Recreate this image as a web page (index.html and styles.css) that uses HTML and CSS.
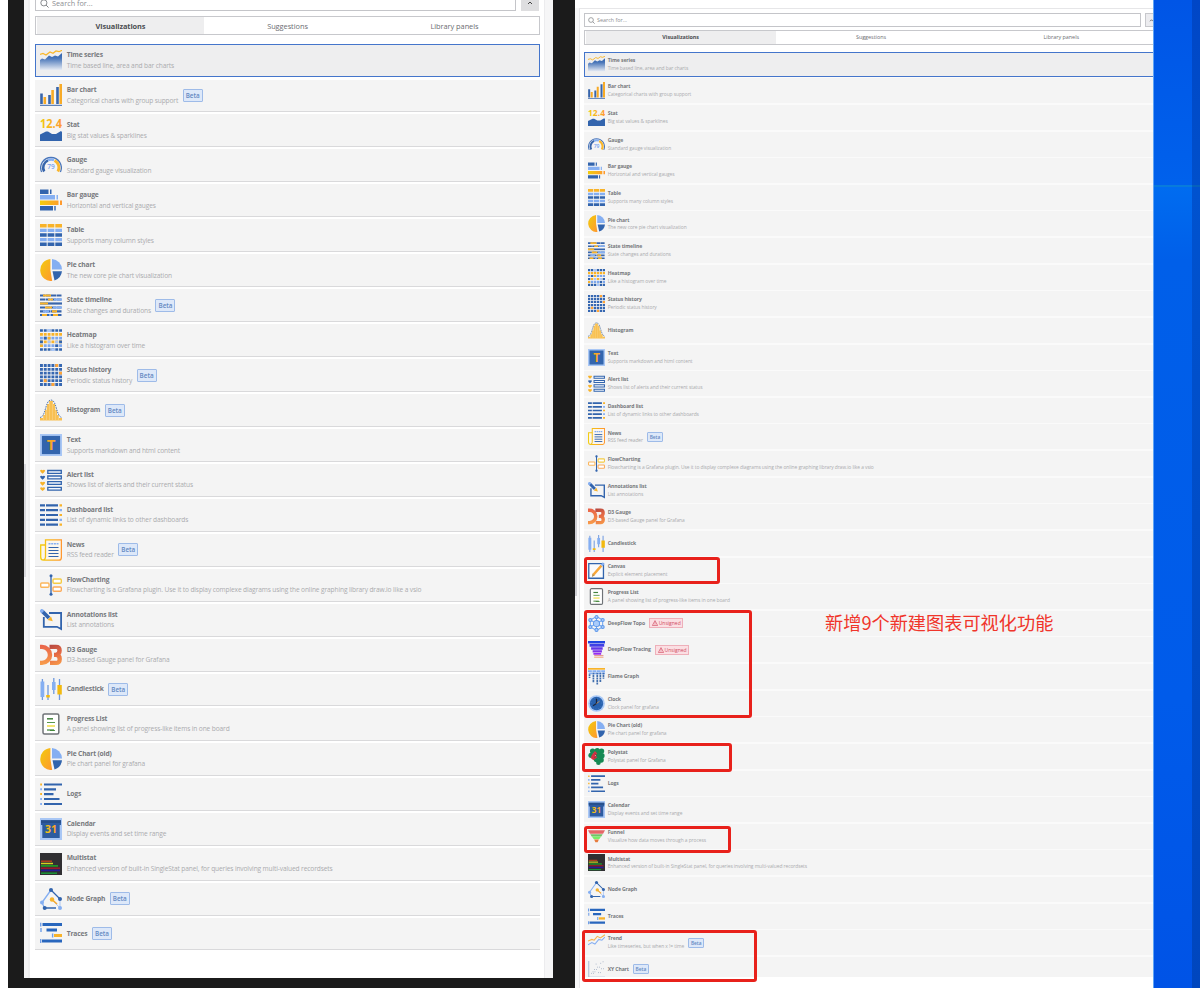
FILE: index.html
```html
<!DOCTYPE html>
<html lang="en">
<head>
<meta charset="utf-8">
<title>Visualizations</title>
<link rel="stylesheet" href="styles.css">
</head>
<body>
<svg class="defs" width="0" height="0">
<defs>
<linearGradient id="gy" x1="0" x2="1" y1="0" y2="1"><stop offset="0" stop-color="#f2cc0c"/><stop offset="1" stop-color="#ff9830"/></linearGradient>
<linearGradient id="gx" x1="0" x2="1" y1="0" y2="0"><stop offset="0" stop-color="#f2cc0c"/><stop offset="1" stop-color="#ff9830"/></linearGradient>
<linearGradient id="ga" x1="0" x2="0" y1="0" y2="1"><stop offset="0" stop-color="#2f62ae"/><stop offset=".3" stop-color="#4674b8"/><stop offset="1" stop-color="#e6ebf4"/></linearGradient>
<linearGradient id="gd" x1="0" x2="0" y1="0" y2="22" gradientUnits="userSpaceOnUse"><stop offset="0" stop-color="#e8604a"/><stop offset="1" stop-color="#f9a04a"/></linearGradient>
<linearGradient id="ge" x1="10" x2="20" y1="0" y2="22" gradientUnits="userSpaceOnUse"><stop offset="0" stop-color="#b0443f"/><stop offset=".5" stop-color="#e66a44"/><stop offset="1" stop-color="#f9a04a"/></linearGradient>
<linearGradient id="gt" x1="0" x2="0" y1="0" y2="1"><stop offset="0" stop-color="#1749e0"/><stop offset="1" stop-color="#a02bef"/></linearGradient>
</defs>
<symbol id="timeseries" viewBox="0 0 22 22"><path d="M0 10 2 8.5 5 9.5 9 5.5 12 7 15 5.5 18 6.5 22 3V20H0Z" fill="url(#ga)"/><path d="M0 4.5 3 3.5 6 5 10 2 13 3.2 16 1 19 1.7 22 .3" fill="none" stroke="#f8b72a" stroke-width="1.2"/></symbol>
<symbol id="barchart" viewBox="0 0 22 22"><path d="M1.5 9.500V20M9.500 11V20M17.500 3V20" stroke="#3865ab" stroke-width="2.600"/><path d="M4.800 13V20M12.600 6V20M20.700 0V20" stroke="#f8ab27" stroke-width="2.600"/><path d="M0 21.300H22" stroke="#3865ab" stroke-width="1"/></symbol>
<symbol id="stat" viewBox="0 0 22 22"><path d="M0 15.500 6 12.500 8 12.500 12 15 16 15 21 12 22 13V22H0Z" fill="#3264ad"/></symbol>
<symbol id="gauge" viewBox="0 0 22 22"><path d="M1.600 18A10.300 10.300 0 1 1 20.400 18" fill="none" stroke="#4a76ba" stroke-width="1.300"/><path d="M4.200 17.500A7.800 7.800 0 0 1 8 6.400" fill="none" stroke="#3865ab" stroke-width="2.600"/><path d="M8 6.200A8 8 0 0 1 14 6" fill="none" stroke="#85aff2" stroke-width="2.400"/><path d="M14.500 6.400A8 8 0 0 1 17.900 17.500" fill="none" stroke="#f9b62c" stroke-width="2.800"/></symbol>
<symbol id="bargauge" viewBox="0 0 22 22"><path d="M0 2.800H8.500M10 2.800H11.500M0 19.300H13M14.300 19.300H15.700" stroke="#3264ad" stroke-width="4.400"/><path d="M0 8.200H15M16.500 8.200H18" stroke="#85aff2" stroke-width="4.400"/><path d="M0 11.500h18.500v4.400H0zM20 11.500h2v4.400h-2z" fill="url(#gx)"/></symbol>
<symbol id="table" viewBox="0 0 22 22"><g stroke-width="3.400" stroke-dasharray="6.700 .95"><path d="M0 1.800H22" stroke="#f8b32a"/><path d="M0 6.400H22M0 15.600H22" stroke="#85aff2"/><path d="M0 11H22M0 20.200H22" stroke="#3264ad"/></g></symbol>
<symbol id="pie" viewBox="0 0 22 22"><path d="M10.400 0A11 11 0 0 0 12.200 22L10.400 11Z" fill="url(#gy)"/><path d="M12 0A11 11 0 0 1 22 10.500H12Z" fill="#85aff2"/><path d="M12.500 12.300H22A11 11 0 0 1 14.500 21.500Z" fill="#3264ad"/></symbol>
<symbol id="timeline" viewBox="0 0 22 22"><g stroke-width="2.200"><path d="M0 1.500H22M0 5.500H22M0 13.500H22M0 17.300H22M0 21H22" stroke="#3865ab" stroke-dasharray="5 .5"/><path d="M0 9.500H22" stroke="#3865ab"/><path d="M3 1.500H11M8 5.500H13M0 9.500H8M5 13.500H12M12 17.300H17M2 21H7M13 21H18" stroke="#f8b32a"/><path d="M14 5.500H22M13 13.500H22M3 17.300H9M9 21H11" stroke="#85aff2"/></g></symbol>
<symbol id="heatmap" viewBox="0 0 22 22"><g stroke-width="2.700" stroke-dasharray="2.900 .92"><path d="M0 1.500H22M0 20.500H22" stroke="#3264ad"/><path d="M0 5.300H22M0 12.900H22" stroke="#f8b32a"/><path d="M0 9.100H22M0 16.700H22" stroke="#7da7ec"/></g><path d="M7.640 0h2.900v2.900h-2.900zM15.280 11.600h2.900v2.700h-2.900zM7.640 11.600h2.900v2.700h-2.900zM11.460 19.200h2.900v2.700h-2.900z" fill="#a9c6f7"/><path d="M0 11.600h2.900v2.700H0zM19.100 11.600H22v2.700h-2.900zM3.820 7.800h2.900v2.700h-2.900zM15.280 15.400h2.900v2.700h-2.900z" fill="#3264ad"/><path d="M7.640 7.800h2.900v2.700h-2.900zM0 15.400h2.900v2.700H0z" fill="#f8b32a"/></symbol>
<symbol id="history" viewBox="0 0 22 22"><path d="M0 1.500H22M0 5.300H22M0 9.100H22M0 12.900H22M0 16.700H22M0 20.500H22" stroke="#3667b1" stroke-width="2.800" stroke-dasharray="2.900 .92"/><path d="M15.280 0h2.900v2.900h-2.900zM19.100 7.700H22v2.900h-2.900zM3.820 15.300h2.900v2.900h-2.900zM11.460 19.100h2.900V22h-2.900z" fill="#ffa336"/></symbol>
<symbol id="histogram" viewBox="0 0 22 22"><path d="M0 21.500V19H3V16H5V11H7V5H9V2H13V5H15V11H17V16H19V19H22V21.500Z" fill="#f8c052"/><path d="M3.500 22V15M6.500 22V8M9.500 22V3M12.500 22V3M15.500 22V8M18.500 22V15" stroke="#fad997" stroke-width=".5"/><path d="M0 18.500C6 18 5 1 11 1S16 18 22 18.500" fill="none" stroke="#5578ac" stroke-width="1" stroke-dasharray="1.500 .9"/></symbol>
<symbol id="text" viewBox="0 0 22 22"><path d="M0 0H22V22H0Z" fill="#a9c7f5"/><path d="M1.900 1.900H20.100V20.100H1.900Z" fill="#3264ad"/></symbol>
<symbol id="alert" viewBox="0 0 22 22"><path d="M7.800 1.500H21.300V4.300H7.800ZM7.800 7H21.300V9.800H7.800ZM7.800 12.600H21.300V15.400H7.800ZM7.800 18.300H21.300V21.100H7.800Z" fill="#f2f6fd" stroke="#3264ad" stroke-width="1.300"/><path d="M0 1.500Q1.300 0 2.600 1.200 4 0 5.200 1.500 5 3 2.600 4.800 .2 3 0 1.500ZM0 13.500Q1.300 12 2.600 13.200 4 12 5.200 13.500 5 15 2.600 16.800 .2 15 0 13.500ZM0 19Q1.300 17.500 2.600 18.700 4 17.500 5.200 19 5 20.500 2.600 22 .2 20.500 0 19Z" fill="#f8b32a"/><path d="M0 7.500Q1.300 6 2.600 7.200 4 6 5.200 7.500 5 9 2.600 10.800 .2 9 0 7.500Z" fill="#3264ad"/></symbol>
<symbol id="dashlist" viewBox="0 0 22 22"><path d="M0 1.400H5M6 1.400H18M0 6.200H5M6 6.200H18M0 11H5M6 11H18M0 15.800H5M6 15.800H18M0 20.600H5M6 20.600H18" stroke="#3264ad" stroke-width="2.200"/><path d="M19.500 1.400H22M19.500 11H22M19.500 20.600H22" stroke="#f8b32a" stroke-width="2.200"/><path d="M19.500 6.200H22M19.500 15.800H22" stroke="#85aff2" stroke-width="2.200"/></symbol>
<symbol id="news" viewBox="0 0 22 22"><path d="M5.500 6H.700V18Q.7 21.200 3.500 21.200H19Q21.400 21.200 21.400 18V.800H5.500V18Q5.500 20.500 3.500 21" fill="#fbf6ee" stroke="url(#gx)" stroke-width="1.300"/><path d="M8.500 4.800H18.500" stroke="#85aff2" stroke-width="1.600" stroke-dasharray="2 .7"/><path d="M8.500 8.500H18.500M8.500 11.500H18.500M8.500 14.500H18.500M8.500 17.500H18.500" stroke="#3264ad" stroke-width="1.200"/></symbol>
<symbol id="flow" viewBox="0 0 22 22"><path d="M11 1V21" stroke="#3264ad" stroke-width="1.300"/><circle cx="11" cy="1.800" r="1.500" fill="#3264ad"/><circle cx="11" cy="20.300" r="1.500" fill="#3264ad"/><g fill="#fff" stroke-width="1.400"><rect x=".7" y="9" width="8.300" height="4.200" rx="1" stroke="#fbb65c"/><rect x="13" y="5" width="8.300" height="4.200" rx="1" stroke="#f4cb45"/><rect x="13" y="13" width="8.300" height="4.200" rx="1" stroke="#fbaa59"/></g></symbol>
<symbol id="annot" viewBox="0 0 22 22"><path d="M9 4H21.100V20L17 17.800H3.800V8" fill="none" stroke="#3264ad" stroke-width="1.800"/><path d="M2 2 9 9" stroke="#3264ad" stroke-width="3.800"/><path d="M.500 .800 3 3" stroke="#85aff2" stroke-width="3.600"/><path d="M7.500 11 11 7.500 12.800 12.300Z" fill="#f8b32a"/></symbol>
<symbol id="d3" viewBox="0 0 22 22"><path d="M0 2.900H2A8 8 0 0 1 2 18.900H0" fill="none" stroke="url(#gd)" stroke-width="4.400"/><path d="M9.500 2.900H16Q19.600 2.900 19.600 6.500T16 10.900H14M16 10.900Q19.700 11 19.700 15T16 18.900H10" fill="none" stroke="url(#ge)" stroke-width="4.400"/></symbol>
<symbol id="candle" viewBox="0 0 22 22"><path d="M2.400 1V22M8 7V22M13.800 0V16M19.500 1V22" stroke="#6e99df" stroke-width="1.300"/><path d="M.500 3.500H4.300V19H.500ZM12 4H15.600V12H12Z" fill="#85aff2"/><path d="M6.200 17H9.800V19.500H6.200ZM17.400 7H21.800V16.500H17.400Z" fill="#f2b90f"/></symbol>
<symbol id="progress" viewBox="0 0 22 22"><rect x="3" y=".9" width="15.800" height="20.200" rx="1.500" fill="#fff" stroke="#6f7377" stroke-width="1.500"/><path d="M7 5.800H13" stroke="#43833f" stroke-width="1.500"/><path d="M7 9.500H15M10 17.500H15" stroke="#59974d" stroke-width="1.200"/><path d="M7 13H15" stroke="#f0dd45" stroke-width="1.500"/><path d="M7 17H14" stroke="#3c8035" stroke-width="1.200"/></symbol>
<symbol id="canvas" viewBox="0 0 22 22"><path d="M1 2H20V21H1Z" fill="#fafbfd" stroke="#3264ad" stroke-width="1.700"/><path d="M7 16.500 17.500 4.500" stroke="#f8a638" stroke-width="3.300"/><path d="M17.500 4.500 20.300 1.500" stroke="#85aff2" stroke-width="3"/><path d="M5 19.500 5.800 15 8.700 17.400Z" fill="#bf914a"/></symbol>
<symbol id="topo" viewBox="0 0 22 22"><path d="M11 2 19 6.500V15.500L11 20 3 15.500V6.500ZM3 6.500 19 15.500M19 6.500 3 15.500M11 2V20" fill="none" stroke="#6da3ee" stroke-width="1.300"/><g fill="#a9cbfa" stroke="#5e98e9" stroke-width="1.300"><circle cx="11" cy="11" r="4"/><circle cx="11" cy="2.700" r="2"/><circle cx="19" cy="6.500" r="2"/><circle cx="19" cy="15.500" r="2"/><circle cx="11" cy="19.300" r="2"/><circle cx="3" cy="15.500" r="2"/><circle cx="3" cy="6.500" r="2"/></g></symbol>
<symbol id="tracing" viewBox="0 0 22 22"><path d="M0 0H22V3.300H0ZM2 4H21V7.300H2ZM4 8H19V11.300H4ZM6 12H18V14.800H6ZM7 15.500H17V17.700H7Z" fill="url(#gt)"/><path d="M8 19H20" stroke="#e59d91" stroke-width="1.700"/><path d="M8 21.300H20" stroke="#f2b38e" stroke-width="1.200"/></symbol>
<symbol id="flame" viewBox="0 0 22 22"><path d="M0 1H22" stroke="#f8b32a" stroke-width="2.400"/><path d="M0 4H22M1 7H22" stroke="#85aff2" stroke-width="2.200" stroke-dasharray="5 .7"/><path d="M2 8V13M7 6V19M12 6V22M16 6V18M20 6V14" stroke="#426fae" stroke-width="2.200" stroke-dasharray="2.400 .8"/></symbol>
<symbol id="clock" viewBox="0 0 22 22"><circle cx="11" cy="11" r="10.800" fill="#a9c9f7"/><circle cx="11" cy="11" r="8.600" fill="#2862af"/><path d="M11 5V11L6.500 14" fill="none" stroke="#1b2840" stroke-width="1.600"/><path d="M11 11 15 8" stroke="#e59c4a" stroke-width="1"/><circle cx="11" cy="11" r="7" fill="none" stroke="#6e9bd8" stroke-width=".8" stroke-dasharray=".7 3"/></symbol>
<symbol id="polystat" viewBox="0 0 22 22"><g fill="#168953"><circle cx="6" cy="4" r="3.500"/><circle cx="12" cy="3.500" r="3.500"/><circle cx="17.500" cy="4" r="3.500"/><circle cx="4" cy="9.500" r="3.500"/><circle cx="14" cy="9" r="4"/><circle cx="18" cy="10" r="3.500"/><circle cx="11" cy="15" r="3.500"/><circle cx="17" cy="15.500" r="3.500"/><circle cx="13.500" cy="19" r="3"/></g><path d="M9 4 12 7 9 10 12 12 7 16 3.500 13 5 9Z" fill="#d43343"/><path d="M9 7 11 10 8 13" fill="none" stroke="#8f2a3c"/></symbol>
<symbol id="logs" viewBox="0 0 22 22"><path d="M4 1.500H22M4 6.300H16M4 11.100H13.500M4 16H19.500M4 21H22" stroke="#3264ad" stroke-width="2.200"/><path d="M.200 1.500H2M.200 11.100H2" stroke="#f8b32a" stroke-width="2"/><path d="M.200 6.300H2M.200 16H2M.200 21H2" stroke="#85aff2" stroke-width="2"/></symbol>
<symbol id="calendar" viewBox="0 0 22 22"><path d="M0 0H22V22H0Z" fill="#a9c7f5"/><path d="M1 2.300H21V7H19.700V20H2.300V7H1Z" fill="#2d5ba0"/><path d="M1 2.300H21V5H1Z" fill="#274f8b"/></symbol>
<symbol id="funnel" viewBox="0 0 22 22"><path d="M0 3H22L19.500 7.500H2.500Z" fill="#e56667"/><path d="M3 8H19L17.200 11H4.800Z" fill="#73bf69"/><path d="M5 11H17L14.500 14.500H7.500Z" fill="#76ee66"/><path d="M8 15H14L12.500 18.500H9.500Z" fill="#e77c3d"/></symbol>
<symbol id="multistat" viewBox="0 0 22 22"><path d="M0 0H22V22H0Z" fill="#302f32"/><path d="M1 8.200H12" stroke="#b8401c" stroke-width="1.400"/><path d="M1 10.500H13" stroke="#d6d01e" stroke-width="1.500"/><path d="M1 12.900H18" stroke="#1f9a28" stroke-width="1.700"/><path d="M1 15.200H20" stroke="#98192b" stroke-width="1.600"/><path d="M1 17.400H20" stroke="#251b95" stroke-width="1.700"/><path d="M1 20.200H17" stroke="#1b9639" stroke-width="1.500"/></symbol>
<symbol id="node" viewBox="0 0 22 22"><path d="M11 2 2 14.500M2 14.500 4.500 20" stroke="#85aff2" stroke-width="1.300"/><path d="M11 2 20 11M5 20H16" stroke="#3264ad" stroke-width="1.300"/><path d="M11.500 11 20 20M20 11V20" stroke="#a9c5f2" stroke-width="1"/><path d="M12 11.500 17 16" stroke="#f8a72a" stroke-width="1.500"/><g fill="#3264ad"><circle cx="11" cy="2" r="2"/><circle cx="20" cy="11" r="2"/><circle cx="4.700" cy="20" r="2"/></g><circle cx="12" cy="11.500" r="2.200" fill="#f8b32a"/><g fill="#85aff2"><circle cx="2" cy="14.500" r="2"/><circle cx="20" cy="20" r="2"/></g></symbol>
<symbol id="traces" viewBox="0 0 22 22"><path d="M2.500 2.500H22M6.500 8H17M2 19H22" stroke="#2866bd" stroke-width="2.800"/><path d="M.700 .800V4.500M1 6V10M12.600 11.500V15.500M.700 17V21" stroke="#719fe7" stroke-width="1.400"/><path d="M14 12H22V15H14Z" fill="#f8b32a"/></symbol>
<symbol id="trend" viewBox="0 0 22 22"><path d="M0 9 5 7 8 8 12 3 16 5 22 1" fill="none" stroke="#f8b24d" stroke-width="1.300"/><path d="M0 14 5 11 9 13 14 7 18 8 22 4" fill="none" stroke="#85aff2" stroke-width="1.300"/></symbol>
<symbol id="xy" viewBox="0 0 22 22"><path d="M1 0V21H22" fill="none" stroke="#92a9ca" stroke-width="1"/><path d="M4 16H8M6 14H11M8 11H13M12 8H17M10 4H12M16 3H18M17 10H21M13 15H17M19 1H21" stroke="#9aa9bf" stroke-width="1.200" stroke-dasharray="1 1.500"/></symbol>
<symbol id="search" viewBox="0 0 10 10"><circle cx="4.300" cy="4.300" r="3.400" fill="none" stroke="#7c7f83" stroke-width="1"/><path d="M6.800 6.800 9.500 9.500" stroke="#7c7f83" stroke-width="1.100"/></symbol>
<symbol id="warn" viewBox="0 0 8 8"><path d="M4 .8 7.500 7.300H.5Z" fill="none" stroke="#cf3c55" stroke-width=".8" stroke-linejoin="round"/><path d="M4 3V5M4 5.700V6.400" stroke="#cf3c55" stroke-width=".8"/></symbol>
</svg>

<main class="desktop">
<section class="monitor">
<div class="screen">
<div class="gutter"><span class="thumb"></span></div>
<div class="picker large">
<div class="bar"><div class="search"><svg><use href="#search"/></svg>Search for...</div><div class="toggle"><svg viewBox="0 0 6 4"><path d="M1 3 3 1 5 3" fill="none" stroke="#444" stroke-width="1"/></svg></div></div>
<div class="tabs"><span class="tab active">Visualizations</span><span class="tab">Suggestions</span><span class="tab">Library panels</span></div>
<div class="list">
<div class="row selected"><svg><use href="#timeseries"/></svg><div><b>Time series</b><p>Time based line, area and bar charts</p></div></div>
<div class="row"><svg><use href="#barchart"/></svg><div><b>Bar chart</b><p>Categorical charts with group support</p></div><i>Beta</i></div>
<div class="row"><svg viewBox="0 0 22 22"><use href="#stat"/><text x="11" y="8.800" text-anchor="middle" textLength="22" lengthAdjust="spacingAndGlyphs" class="glyph" font-size="11.500" fill="url(#gx)">12.4</text></svg><div><b>Stat</b><p>Big stat values &amp; sparklines</p></div></div>
<div class="row"><svg viewBox="0 0 22 22"><use href="#gauge"/><text x="11" y="15" text-anchor="middle" class="glyph thin" font-size="6.500" fill="#72a0ee">79</text></svg><div><b>Gauge</b><p>Standard gauge visualization</p></div></div>
<div class="row"><svg><use href="#bargauge"/></svg><div><b>Bar gauge</b><p>Horizontal and vertical gauges</p></div></div>
<div class="row"><svg><use href="#table"/></svg><div><b>Table</b><p>Supports many column styles</p></div></div>
<div class="row"><svg><use href="#pie"/></svg><div><b>Pie chart</b><p>The new core pie chart visualization</p></div></div>
<div class="row"><svg><use href="#timeline"/></svg><div><b>State timeline</b><p>State changes and durations</p></div><i>Beta</i></div>
<div class="row"><svg><use href="#heatmap"/></svg><div><b>Heatmap</b><p>Like a histogram over time</p></div></div>
<div class="row"><svg><use href="#history"/></svg><div><b>Status history</b><p>Periodic status history</p></div><i>Beta</i></div>
<div class="row"><svg><use href="#histogram"/></svg><div><b>Histogram</b></div><i>Beta</i></div>
<div class="row"><svg viewBox="0 0 22 22"><use href="#text"/><text x="11" y="16.300" text-anchor="middle" class="glyph" font-size="15" fill="#f7a829">T</text></svg><div><b>Text</b><p>Supports markdown and html content</p></div></div>
<div class="row"><svg><use href="#alert"/></svg><div><b>Alert list</b><p>Shows list of alerts and their current status</p></div></div>
<div class="row"><svg><use href="#dashlist"/></svg><div><b>Dashboard list</b><p>List of dynamic links to other dashboards</p></div></div>
<div class="row"><svg><use href="#news"/></svg><div><b>News</b><p>RSS feed reader</p></div><i>Beta</i></div>
<div class="row"><svg><use href="#flow"/></svg><div><b>FlowCharting</b><p>Flowcharting is a Grafana plugin. Use it to display complexe diagrams using the online graphing library draw.io like a vsio</p></div></div>
<div class="row"><svg><use href="#annot"/></svg><div><b>Annotations list</b><p>List annotations</p></div></div>
<div class="row"><svg><use href="#d3"/></svg><div><b>D3 Gauge</b><p>D3-based Gauge panel for Grafana</p></div></div>
<div class="row short"><svg><use href="#candle"/></svg><div><b>Candlestick</b></div><i>Beta</i></div>
<div class="row"><svg><use href="#progress"/></svg><div><b>Progress List</b><p>A panel showing list of progress-like items in one board</p></div></div>
<div class="row"><svg><use href="#pie"/></svg><div><b>Pie Chart (old)</b><p>Pie chart panel for grafana</p></div></div>
<div class="row"><svg><use href="#logs"/></svg><div><b>Logs</b></div></div>
<div class="row"><svg viewBox="0 0 22 22"><use href="#calendar"/><text x="11" y="15" text-anchor="middle" class="glyph" font-size="10.500" fill="url(#gx)">31</text></svg><div><b>Calendar</b><p>Display events and set time range</p></div></div>
<div class="row"><svg><use href="#multistat"/></svg><div><b>Multistat</b><p>Enhanced version of built-in SingleStat panel, for queries involving multi-valued recordsets</p></div></div>
<div class="row"><svg><use href="#node"/></svg><div><b>Node Graph</b></div><i>Beta</i></div>
<div class="row"><svg><use href="#traces"/></svg><div><b>Traces</b></div><i>Beta</i></div>
</div>
</div>
<div class="edge"></div>
</div>
</section>

<section class="window">
<div class="side"><span class="thumb"></span></div>
<div class="picker small">
<div class="bar"><div class="search"><svg><use href="#search"/></svg>Search for...</div><div class="toggle"><svg viewBox="0 0 6 4"><path d="M1 3 3 1 5 3" fill="none" stroke="#444" stroke-width="1"/></svg></div></div>
<div class="tabs"><span class="tab active">Visualizations</span><span class="tab">Suggestions</span><span class="tab">Library panels</span></div>
<div class="list">
<div class="row selected"><svg><use href="#timeseries"/></svg><div><b>Time series</b><p>Time based line, area and bar charts</p></div></div>
<div class="row"><svg><use href="#barchart"/></svg><div><b>Bar chart</b><p>Categorical charts with group support</p></div></div>
<div class="row"><svg viewBox="0 0 22 22"><use href="#stat"/><text x="11" y="8.800" text-anchor="middle" textLength="22" lengthAdjust="spacingAndGlyphs" class="glyph" font-size="11.500" fill="url(#gx)">12.4</text></svg><div><b>Stat</b><p>Big stat values &amp; sparklines</p></div></div>
<div class="row"><svg viewBox="0 0 22 22"><use href="#gauge"/><text x="11" y="15" text-anchor="middle" class="glyph thin" font-size="6.500" fill="#72a0ee">79</text></svg><div><b>Gauge</b><p>Standard gauge visualization</p></div></div>
<div class="row"><svg><use href="#bargauge"/></svg><div><b>Bar gauge</b><p>Horizontal and vertical gauges</p></div></div>
<div class="row"><svg><use href="#table"/></svg><div><b>Table</b><p>Supports many column styles</p></div></div>
<div class="row"><svg><use href="#pie"/></svg><div><b>Pie chart</b><p>The new core pie chart visualization</p></div></div>
<div class="row"><svg><use href="#timeline"/></svg><div><b>State timeline</b><p>State changes and durations</p></div></div>
<div class="row"><svg><use href="#heatmap"/></svg><div><b>Heatmap</b><p>Like a histogram over time</p></div></div>
<div class="row"><svg><use href="#history"/></svg><div><b>Status history</b><p>Periodic status history</p></div></div>
<div class="row"><svg><use href="#histogram"/></svg><div><b>Histogram</b></div></div>
<div class="row"><svg viewBox="0 0 22 22"><use href="#text"/><text x="11" y="16.300" text-anchor="middle" class="glyph" font-size="15" fill="#f7a829">T</text></svg><div><b>Text</b><p>Supports markdown and html content</p></div></div>
<div class="row"><svg><use href="#alert"/></svg><div><b>Alert list</b><p>Shows list of alerts and their current status</p></div></div>
<div class="row"><svg><use href="#dashlist"/></svg><div><b>Dashboard list</b><p>List of dynamic links to other dashboards</p></div></div>
<div class="row"><svg><use href="#news"/></svg><div><b>News</b><p>RSS feed reader</p></div><i>Beta</i></div>
<div class="row"><svg><use href="#flow"/></svg><div><b>FlowCharting</b><p>Flowcharting is a Grafana plugin. Use it to display complexe diagrams using the online graphing library draw.io like a vsio</p></div></div>
<div class="row"><svg><use href="#annot"/></svg><div><b>Annotations list</b><p>List annotations</p></div></div>
<div class="row"><svg><use href="#d3"/></svg><div><b>D3 Gauge</b><p>D3-based Gauge panel for Grafana</p></div></div>
<div class="row"><svg><use href="#candle"/></svg><div><b>Candlestick</b></div></div>
<div class="row"><svg><use href="#canvas"/></svg><div><b>Canvas</b><p>Explicit element placement</p></div></div>
<div class="row"><svg><use href="#progress"/></svg><div><b>Progress List</b><p>A panel showing list of progress-like items in one board</p></div></div>
<div class="row"><svg><use href="#topo"/></svg><div><b>DeepFlow Topo</b></div><em><svg><use href="#warn"/></svg>Unsigned</em></div>
<div class="row"><svg><use href="#tracing"/></svg><div><b>DeepFlow Tracing</b></div><em><svg><use href="#warn"/></svg>Unsigned</em></div>
<div class="row"><svg><use href="#flame"/></svg><div><b>Flame Graph</b></div></div>
<div class="row"><svg><use href="#clock"/></svg><div><b>Clock</b><p>Clock panel for grafana</p></div></div>
<div class="row"><svg><use href="#pie"/></svg><div><b>Pie Chart (old)</b><p>Pie chart panel for grafana</p></div></div>
<div class="row"><svg><use href="#polystat"/></svg><div><b>Polystat</b><p>Polystat panel for Grafana</p></div></div>
<div class="row"><svg><use href="#logs"/></svg><div><b>Logs</b></div></div>
<div class="row"><svg viewBox="0 0 22 22"><use href="#calendar"/><text x="11" y="15" text-anchor="middle" class="glyph" font-size="10.500" fill="url(#gx)">31</text></svg><div><b>Calendar</b><p>Display events and set time range</p></div></div>
<div class="row"><svg><use href="#funnel"/></svg><div><b>Funnel</b><p>Visualize how data moves through a process</p></div></div>
<div class="row"><svg><use href="#multistat"/></svg><div><b>Multistat</b><p>Enhanced version of built-in SingleStat panel, for queries involving multi-valued recordsets</p></div></div>
<div class="row"><svg><use href="#node"/></svg><div><b>Node Graph</b></div></div>
<div class="row"><svg><use href="#traces"/></svg><div><b>Traces</b></div></div>
<div class="row"><svg><use href="#trend"/></svg><div><b>Trend</b><p>Like timeseries, but when x != time</p></div><i>Beta</i></div>
<div class="row"><svg><use href="#xy"/></svg><div><b>XY Chart</b></div><i>Beta</i></div>
</div>
</div>
</section>
<aside class="wallpaper"><div class="wall-a"></div><div class="wall-b"></div></aside>

<div class="mark mark-canvas"></div>
<div class="mark mark-deepflow"></div>
<div class="mark mark-polystat"></div>
<div class="mark mark-funnel"></div>
<div class="mark mark-trend"></div>
<div class="note" lang="zh">新增9个新建图表可视化功能</div>
</main>
</body>
</html>
```
FILE: styles.css
```css
* { box-sizing: border-box; }
body { margin: 0; background: #fff; font-family: "Open Sans", "Noto Sans", sans-serif; }
p { margin: 0; }
.defs { display: block; }
.glyph { font-family: "Open Sans", sans-serif; font-weight: 700; }
.glyph.thin { font-weight: 600; }

.desktop { position: relative; display: flex; width: 1200px; height: 988px; overflow: hidden; }

/* left monitor */
.monitor { width: 567px; margin-left: 8px; padding: 0 22px 10px 16px; background: #1b1b1b; flex: none; }
.screen { display: flex; height: 978px; background: #fff; }
.gutter { width: 6px; background: #f4f4f5; border-right: 2px solid #eeeeef; flex: none; }
.gutter .thumb { display: block; width: 2px; height: 113px; margin-top: 464px; background: #d9d9dd; }
.edge { width: 9px; background: #f6f6f7; border-left: 1px solid #ececee; margin-left: auto; }

/* right window */
.window { width: 577.500px; display: flex; background: #fff; overflow: hidden; flex: none; }
.side { width: 5px; margin-top: 8px; background: #f7f7f8; border-right: 1px solid #e6e6e8; flex: none; }
.side .thumb { display: block; width: 2px; height: 86px; margin-top: 502px; background: #cfcfd4; }

/* shared picker parts */
.picker { display: flex; flex-direction: column; flex: none; }
.bar { display: flex; }
.search { display: flex; align-items: center; border: 1px solid #c4c5c9; background: #fff; color: #8c8e92; }
.toggle { display: flex; align-items: center; justify-content: center; background: #dedee0; }
.tabs { display: flex; border: 1px solid #c7c8cc; background: #fff; }
.tab { flex: 1; display: flex; align-items: center; justify-content: center; color: #6c6e73; }
.tab.active { background: #eeeeef; color: #4c4e52; font-weight: 700; }
.list { display: flex; flex-direction: column; }
.row { display: flex; align-items: center; background: #f4f4f4; white-space: nowrap; flex: none; }
.row > svg { flex: none; }
.row > div { padding-top: 1px; }
.row b { display: block; font-weight: 700; color: #77797d; }
.row p { color: #aaabae; }
.row i { display: flex; align-items: center; justify-content: center; font-style: normal; font-weight: 600; color: #6489c2; background: #dde8f9; border: 1px solid #9ebbe8; border-radius: 1px; }
.row.selected { border: 1px solid #4475cb; background: #eeeeef; }

.large { width: 505px; margin-left: 5px; }
.large .search { width: 481px; height: 16px; margin-top: -5px; padding: 0 4px; font-size: 7.300px; gap: 3px; }
.large .search svg { width: 9px; height: 9px; }
.large .toggle { width: 18px; height: 16px; margin: -5px 0 0 5px; }
.large .toggle svg { width: 6px; height: 4px; }
.large .tabs { height: 19px; margin-top: 5px; padding: 0 1px; font-size: 7.400px; }
.large .tab { letter-spacing: -.050px; }
.large .tab.active { letter-spacing: -.100px; }
.large .list { margin-top: 9px; gap: 2px; }
.large .row { height: 32.960px; padding-left: 5px; border-bottom: 1px solid #d9d9db; }
.large .row.short { height: 32.100px; }
.large .row.selected { height: 33px; padding-left: 4px; border-bottom-color: #4475cb; margin-bottom: .500px; }
.large .row > svg { width: 22px; height: 22px; margin-right: 4.700px; }
.large b { font-size: 6.700px; line-height: 10.600px; letter-spacing: -.150px; }
.large p { font-size: 6.600px; line-height: 10.600px; letter-spacing: -.120px; }
.large i { width: 20px; height: 13px; margin-left: 4.500px; font-size: 6.300px; }

.small { width: 581px; margin: 8px 0 11px 0; padding: 4px 0 0 3.500px; border-top: 1px solid #e6e6e8; overflow: hidden; }
.small .search { width: 557.500px; height: 14px; padding: 0 3px; font-size: 5.400px; gap: 2.500px; }
.small .search svg { width: 7px; height: 7px; }
.small .toggle { width: 14px; height: 14px; margin-left: 3.500px; border: 1px solid #c7c8cc; background: #ececef; }
.small .toggle svg { width: 5px; height: 3px; }
.small .bar, .small .tabs { flex: none; }
.small .tabs { width: 575px; height: 14.500px; margin-top: 3px; padding: 0 1px; font-size: 5.400px; }
.small .tab.active { letter-spacing: -.050px; }
.small .list { width: 575px; margin-top: 7.200px; gap: 1.630px; background: #fafafa; }
.small .row { height: 25px; padding-left: 4px; }
.small .row.selected { padding-left: 3px; }
.small .row > svg { width: 17px; height: 17px; margin-right: 3.200px; }
.small b { font-size: 5.100px; line-height: 7.900px; letter-spacing: -.110px; }
.small p { font-size: 4.900px; line-height: 7.900px; letter-spacing: -.065px; }
.small i { width: 16px; height: 10px; margin-left: 4px; font-size: 4.800px; }
.small em { display: flex; align-items: center; justify-content: center; gap: 1px; width: 34.500px; height: 10px; margin-left: 4px; font-size: 5px; font-style: normal; color: #cf4a60; background: #fbdfe3; border: 1px solid #eeb0ba; }
.small em svg { width: 6px; height: 6px; }

/* wallpaper strip */
.wallpaper { display: flex; flex: 1; border-left: 1px solid #5fa4f5; background: #005bea; }
.wall-a { flex: 1; background: linear-gradient(180deg, #0055e6 0, #0061ec 185px, #087bdc 185px, #087bdc 187px, #006cf0 187px, #005fe9 260px, #005bea 700px, #0053e6 988px); }
.wall-b { width: 8.500px; background: linear-gradient(180deg, #0046c6 0, #004fcb 185px, #0561bd 185px, #0561bd 187px, #0052cf 187px, #0046be 988px); }

/* review marks laid over the list */
.mark { position: absolute; border: 3px solid #e8211b; border-radius: 3px; }
.mark-canvas { left: 584px; top: 557px; width: 136px; height: 27px; }
.mark-deepflow { left: 584px; top: 610px; width: 168px; height: 108px; }
.mark-polystat { left: 582px; top: 743px; width: 150px; height: 29px; }
.mark-funnel { left: 584px; top: 826px; width: 147px; height: 27px; }
.mark-trend { left: 582px; top: 930px; width: 175px; height: 52px; }
.note { position: absolute; left: 825px; top: 609px; font-family: "Noto Sans CJK SC", sans-serif; font-size: 18.200px; line-height: 27px; font-weight: 400; color: #f0352b; white-space: nowrap; }
```
